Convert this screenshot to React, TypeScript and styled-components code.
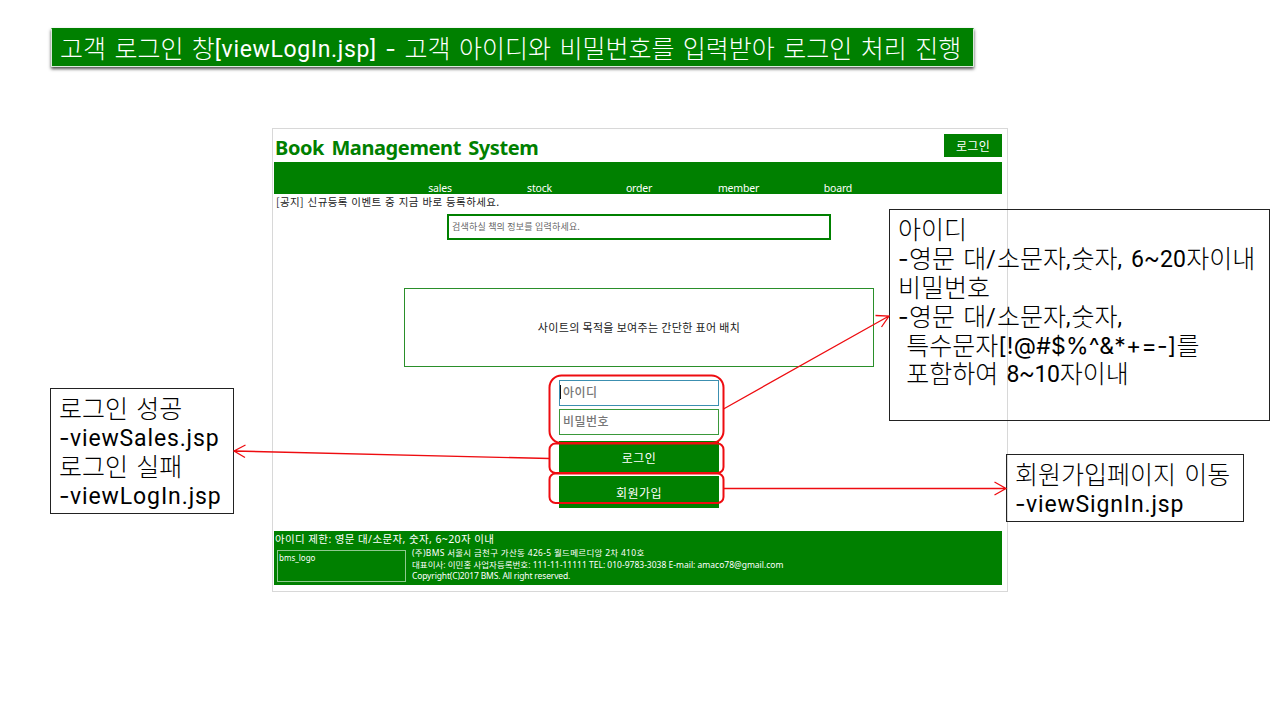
import React from "react";
import styled, { createGlobalStyle } from "styled-components";

const GREEN = "#008000";
const RED = "#ee0c10";

const GlobalStyle = createGlobalStyle`
  * { box-sizing: border-box; }
  body {
    margin: 0;
    background: #fff;
    font-family: "Noto Sans", "Noto Sans CJK KR", sans-serif;
  }
`;

const Slide = styled.main`
  position: relative;
  width: 1280px;
  height: 720px;
  overflow: hidden;
  padding: 28px 0 0 51px;
`;

const Title = styled.h1`
  width: 923px;
  height: 39px;
  margin: 0 0 61px;
  padding: 0 0 0 8px;
  background: ${GREEN};
  border: 1px solid #d9ead9;
  border-top-color: ${GREEN};
  box-shadow: 0 2px 3px rgba(0, 0, 0, 0.7);
  color: #fff;
  font: 300 25px/36px "Noto Sans CJK KR", sans-serif;
  word-spacing: 2.9px;
  white-space: pre;
`;

const Run = styled.span<{ $track?: number; $wide?: boolean }>`
  font-family: ${(p) => (p.$wide ? "Inter" : "Roboto")}, "Noto Sans CJK KR", sans-serif;
  font-weight: 400;
  font-size: 23px;
  line-height: 1;
  letter-spacing: ${(p) => p.$track ?? 0}px;
  vertical-align: 1px;
`;

const Panel = styled.section`
  display: flex;
  flex-direction: column;
  width: 736px;
  height: 464px;
  margin-left: 221px;
  padding: 5px 5px 6px 1px;
  border: 1px solid #d8d8d8;
`;

const Header = styled.header`
  display: flex;
  justify-content: space-between;
  height: 28px;
  padding-left: 1px;
`;

const Brand = styled.div`
  color: ${GREEN};
  font: 700 20px/27px "Noto Sans", sans-serif;
  letter-spacing: -0.4px;
  word-spacing: 2.5px;
  white-space: nowrap;
`;

const SmallButton = styled.button`
  width: 58px;
  height: 23px;
  padding: 0;
  border: 0;
  background: ${GREEN};
  color: #fff;
  font: 400 12px/23px "Noto Sans CJK KR", sans-serif;
  letter-spacing: 0.3px;
`;

const Nav = styled.nav`
  display: flex;
  justify-content: center;
  align-items: flex-end;
  height: 32px;
  padding-left: 2px;
  background: ${GREEN};
`;

const NavItem = styled.a`
  width: 99.5px;
  color: #fff;
  font: 400 10.5px/12px "Noto Sans", sans-serif;
  letter-spacing: -0.2px;
  text-align: center;
`;

const Notice = styled.p`
  height: 20px;
  margin: 0;
  padding-left: 2px;
  color: #222;
  font: 400 10.5px/16px "Noto Sans CJK KR", sans-serif;
  letter-spacing: 0.4px;
  word-spacing: 0.8px;
`;

const Search = styled.div`
  width: 384px;
  height: 26px;
  margin-left: 173px;
  padding-left: 3px;
  border: 2px solid ${GREEN};
  color: #666;
  font: 400 9px/22px "Noto Sans CJK KR", sans-serif;
  letter-spacing: 0.2px;
`;

const Slogan = styled.div`
  width: 470px;
  height: 79px;
  margin: 48px 0 13px 130px;
  border: 1px solid #2a8f2a;
  color: #222;
  font: 400 11px/77px "Noto Sans CJK KR", sans-serif;
  letter-spacing: 0.35px;
  text-align: center;
`;

const Form = styled.form`
  display: flex;
  flex-direction: column;
  width: 160px;
  margin-left: 285px;
`;

const Field = styled.div<{ $focused?: boolean }>`
  display: flex;
  align-items: center;
  height: 26px;
  margin-bottom: 3px;
  padding: 0 0 2px ${(p) => (p.$focused ? 0 : 3)}px;
  border: 1px solid ${(p) => (p.$focused ? "#3c8fb0" : "#3a983a")};
  color: #777;
  font: 500 12px/22px "Noto Sans CJK KR", sans-serif;
  letter-spacing: 0.5px;
`;

const Caret = styled.i`
  width: 1px;
  height: 14px;
  margin-right: 2px;
  background: #111;
`;

const Submit = styled.button`
  height: 32px;
  margin: 3px 0 0;
  padding: 1px 0 0;
  border: 0;
  background: ${GREEN};
  color: #fff;
  font: 400 12px/31px "Noto Sans CJK KR", sans-serif;
  letter-spacing: 0.5px;
`;

const Footer = styled.footer`
  height: 54px;
  margin-top: auto;
  background: ${GREEN};
  color: #fff;
  font-family: "Noto Sans", "Noto Sans CJK KR", sans-serif;
  white-space: nowrap;
`;

const Limit = styled.div`
  height: 16px;
  padding-left: 1px;
  font-size: 10.5px;
  line-height: 16px;
  letter-spacing: 0.4px;
`;

const Company = styled.div`
  display: flex;
  gap: 6px;
  padding: 0 3px;
`;

const Logo = styled.div`
  width: 129px;
  height: 32px;
  margin-top: 3px;
  padding-left: 1px;
  border: 1px solid #8fc98f;
  font-size: 8px;
  line-height: 14px;
`;

const Address = styled.address`
  font-style: normal;
  font-size: 8.5px;
  line-height: 11.5px;
`;

const AddressLine = styled.div<{ $track?: number }>`
  letter-spacing: ${(p) => p.$track ?? 0}px;
`;

const Note = styled.aside<{ $x: number; $y: number; $w: number; $h: number }>`
  position: absolute;
  left: ${(p) => p.$x}px;
  top: ${(p) => p.$y}px;
  width: ${(p) => p.$w}px;
  height: ${(p) => p.$h}px;
  padding: 4px 8px;
  border: 1px solid #222;
  color: #000;
  font: 300 25px/29px "Noto Sans CJK KR", sans-serif;
  word-spacing: 2.7px;
  white-space: pre;
`;

const NoteLine = styled.div`
  height: 28.9px;
`;

const Marks = styled.svg`
  position: absolute;
  inset: 0;
  pointer-events: none;
`;

const Dash = () => <Run $wide $track={0.4}>-</Run>;

export default function App() {
  return (
    <>
      <GlobalStyle />
      <Slide>
        <Title>
          고객 로그인 창<Run $track={0.65}>[viewLogIn.jsp]</Run> <Dash /> 고객 아이디와 비밀번호를 입력받아 로그인 처리 진행
        </Title>

        <Panel>
          <Header>
            <Brand>Book Management System</Brand>
            <SmallButton>로그인</SmallButton>
          </Header>
          <Nav>
            {["sales", "stock", "order", "member", "board"].map((item) => (
              <NavItem key={item}>{item}</NavItem>
            ))}
          </Nav>
          <Notice>[공지] 신규등록 이벤트 중 지금 바로 등록하세요.</Notice>
          <Search>검색하실 책의 정보를 입력하세요.</Search>
          <Slogan>사이트의 목적을 보여주는 간단한 표어 배치</Slogan>
          <Form>
            <Field $focused><Caret />아이디</Field>
            <Field>비밀번호</Field>
            <Submit type="button">로그인</Submit>
            <Submit type="button">회원가입</Submit>
          </Form>
          <Footer>
            <Limit>아이디 제한: 영문 대/소문자, 숫자, 6~20자 이내</Limit>
            <Company>
              <Logo>bms_logo</Logo>
              <Address>
                <AddressLine $track={0.3}>(주)BMS 서울시 금천구 가산동 426-5 월드메르디앙 2차 410호</AddressLine>
                <AddressLine>대표이사: 이민홍 사업자등록번호: 111-11-11111 TEL: 010-9783-3038 E-mail: amaco78@gmail.com</AddressLine>
                <AddressLine $track={-0.15}>Copyright(C)2017 BMS. All right reserved.</AddressLine>
              </Address>
            </Company>
          </Footer>
        </Panel>

        <Note $x={889} $y={209} $w={381} $h={212}>
          <NoteLine>아이디</NoteLine>
          <NoteLine><Dash />영문 대<Run $track={1.3}>/</Run>소문자<Run $track={1}>,</Run>숫자<Run $track={0.2}>, 6~20</Run>자이내</NoteLine>
          <NoteLine>비밀번호</NoteLine>
          <NoteLine><Dash />영문 대<Run $track={1.3}>/</Run>소문자<Run $track={1}>,</Run>숫자<Run>,</Run></NoteLine>
          <NoteLine> 특수문자<Run $wide $track={0.25}>[!@#$%^&amp;*+=-]</Run>를</NoteLine>
          <NoteLine> 포함하여 <Run $track={-0.3}>8~10</Run>자이내</NoteLine>
        </Note>
        <Note $x={50} $y={388} $w={184} $h={126}>
          <NoteLine>로그인 성공</NoteLine>
          <NoteLine><Dash /><Run $track={0.85}>viewSales.jsp</Run></NoteLine>
          <NoteLine>로그인 실패</NoteLine>
          <NoteLine><Dash /><Run $track={0.9}>viewLogIn.jsp</Run></NoteLine>
        </Note>
        <Note $x={1006} $y={454} $w={238} $h={68}>
          <NoteLine>회원가입페이지 이동</NoteLine>
          <NoteLine><Dash /><Run $track={0.85}>viewSignIn.jsp</Run></NoteLine>
        </Note>

        <Marks width="1280" height="720" fill="none" stroke={RED}>
          <g strokeWidth="2">
            <rect x="549.5" y="375.5" width="174" height="67.5" rx="12" />
            <rect x="549.5" y="443.5" width="174" height="29.5" rx="6" />
            <rect x="549.5" y="473.5" width="174" height="29.5" rx="6" />
          </g>
          <g strokeWidth="1.3">
            <path d="M723.5 409 L889 316 M875.5 315.5 L889 316 L881.5 327" />
            <path d="M549.5 458.5 L234 451 M245.5 445 L234 451 L245 457.5" />
            <path d="M723.5 488.5 H1006 M994.5 482 L1006 488.5 L994.5 495" />
          </g>
        </Marks>
      </Slide>
    </>
  );
}
